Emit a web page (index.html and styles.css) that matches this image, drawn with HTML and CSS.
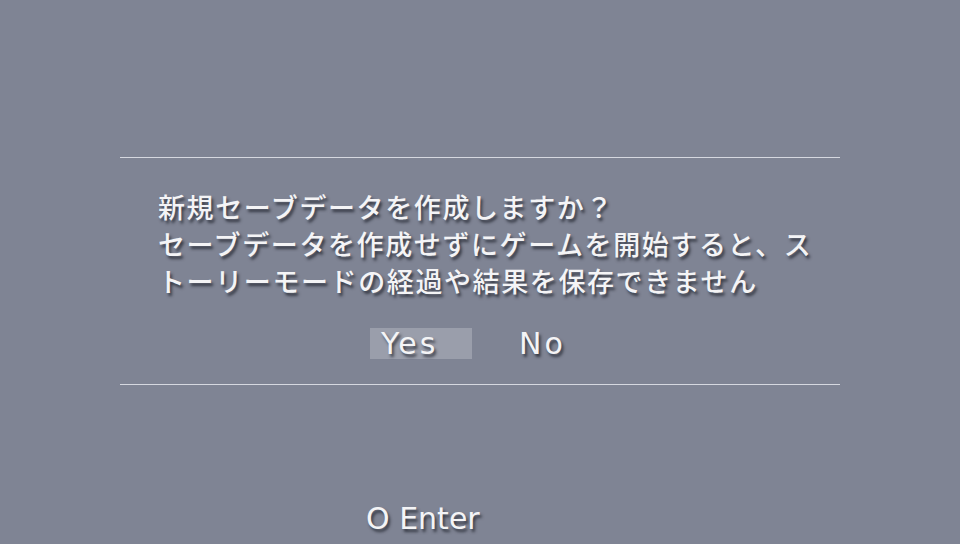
FILE: index.html
```html
<!DOCTYPE html>
<html lang="ja">
<head>
    <meta charset="UTF-8">
    <title>セーブデータ</title>
    <link rel="stylesheet" href="styles.css">
</head>
<body>
    <div class="dialog">
        <div class="message">
            <p>新規セーブデータを作成しますか？</p>
            <p>セーブデータを作成せずにゲームを開始すると、ス</p>
            <p>トーリーモードの経過や結果を保存できません</p>
        </div>
        <div class="choices">
            <span class="choice selected">Yes</span>
            <span class="choice">No</span>
        </div>
    </div>
    <div class="hint">O Enter</div>
</body>
</html>
```

FILE: styles.css
```css
body {
    margin: 0;
    height: 544px;
    overflow: hidden;
    background-color: #7f8494;
    color: #f4f4f6;
    font-family: "Noto Sans CJK JP", sans-serif;
    text-shadow: 2px 3px 3px rgba(30, 32, 42, 0.75);
}
.dialog {
    width: 720px;
    margin: 157px auto 0;
    border-top: 1px solid #d6d8e0;
    border-bottom: 1px solid #d6d8e0;
}
.message {
    padding: 30px 0 0 38px;
    font-size: 27px;
    font-weight: 500;
    line-height: 37px;
    letter-spacing: 1.6px;
}
.message p {
    margin: 0;
    white-space: nowrap;
}
.choices {
    display: flex;
    gap: 47px;
    padding: 29px 0 25px 250px;
    font-family: "DejaVu Sans", sans-serif;
    font-size: 30px;
    line-height: 31px;
    letter-spacing: 3px;
}
.choice.selected {
    width: 102px;
    box-sizing: border-box;
    padding-left: 11px;
    background-color: #9a9eab;
}
.hint {
    margin: 118px 0 0 366px;
    font-family: "DejaVu Sans", sans-serif;
    font-size: 30px;
    line-height: 32px;
}
```
